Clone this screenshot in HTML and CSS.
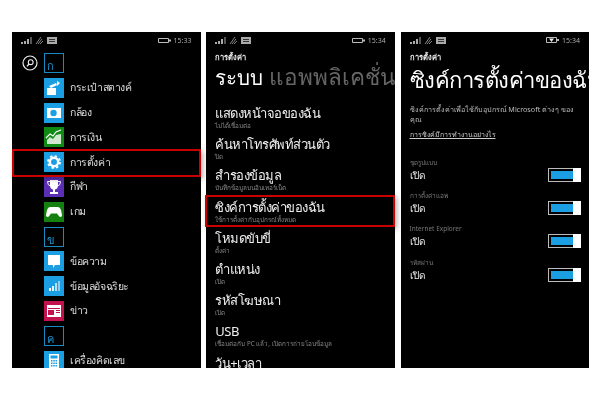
FILE: index.html
```html
<!DOCTYPE html>
<html lang="th">
<head>
    <meta charset="UTF-8">
    <link rel="stylesheet" href="styles.css">
    <title>ซิงค์การตั้งค่า</title>
</head>
<body>
    <div class="shots">

        <!-- app list -->
        <section class="phone">
            <div class="screen">
                <div class="status">
                    <span class="status-left">
                        <svg width="11" height="7" viewBox="0 0 11 7"><path fill="#aaa" d="M0 5h2v2H0zM3 4h2v3H3zM6 2h2v5H6z"/><path fill="#555" d="M9 0h2v7H9z"/></svg>
                        <svg width="9" height="7" viewBox="0 0 9 7"><path fill="none" stroke="#888" d="M1 7L6 0M3 7l4-5M5 7l3-3"/></svg>
                        <svg width="10" height="7" viewBox="0 0 10 7"><path fill="#aaa" d="M0 0h10v7H0z"/><path fill="#333" d="M2 2h6v1H2zM2 4h6v1H2z"/></svg>
                    </span>
                    <span class="status-right">
                        <svg width="13" height="5" viewBox="0 0 13 5"><path fill="none" stroke="#bbb" d="M.5.5h10v4H.5z"/><path fill="#bbb" d="M11 1.500h2v2h-2z"/></svg>
                        15:33
                    </span>
                </div>
                <div class="app-list">
                    <div class="search-col">
                        <svg width="16" height="16" viewBox="0 0 16 16"><circle cx="8" cy="8" r="7" fill="none" stroke="#eee" stroke-width="1.2"/><circle cx="8.700" cy="7.200" r="2.400" fill="none" stroke="#eee" stroke-width="1.100"/><path d="M7 9l-2 2.400" stroke="#eee" stroke-width="1.300"/></svg>
                    </div>
                    <div class="apps">
                        <div class="app"><span class="tile letter">ก</span></div>
                        <div class="app"><span class="tile blue">
                            <svg viewBox="0 0 20 20"><path fill="#fff" d="M3 10h9v7H3zM5 8l7-3 1 2-6 3zM13 3l3 2-3 3z"/></svg>
                        </span>กระเป๋าสตางค์</div>
                        <div class="app"><span class="tile blue">
                            <svg viewBox="0 0 20 20"><rect x="3" y="5" width="14" height="10" fill="#fff"/><circle cx="9.500" cy="10" r="3.200" fill="#1c9fe2"/></svg>
                        </span>กล้อง</div>
                        <div class="app"><span class="tile green">
                            <svg viewBox="0 0 20 20"><path fill="#cfe8cf" d="M3 17v-4l3-3 3 2 3-4 5-1v10z"/><path fill="none" stroke="#fff" stroke-width="1.200" d="M2 11l4-4 3 2 3-4 5-2"/></svg>
                        </span>การเงิน</div>
                        <div class="app"><span class="tile blue">
                            <svg viewBox="0 0 20 20"><circle cx="10" cy="10" r="4.200" fill="none" stroke="#fff" stroke-width="2.400"/><circle cx="10" cy="10" r="6" fill="none" stroke="#fff" stroke-width="1.800" stroke-dasharray="2.400 2.300"/></svg>
                        </span>การตั้งค่า</div>
                        <div class="app"><span class="tile purple">
                            <svg viewBox="0 0 20 20"><path fill="#fff" d="M6 3h8v5q0 4-3 4.600V15h3v2H6v-2h3v-2.400Q6 12 6 8z"/><path fill="none" stroke="#fff" d="M6 4.500H3.500q0 4 3 4.500M14 4.500h2.500q0 4-3 4.500"/></svg>
                        </span>กีฬา</div>
                        <div class="app"><span class="tile dark-green">
                            <svg viewBox="0 0 20 20"><path fill="#fff" d="M6 5h8q2 0 3 3l1 5q0 2-1.500 2-1 0-2-1.500L13 11.500H7L5.500 13.500Q4.500 15 3.500 15 2 15 2 13l1-5q1-3 3-3z"/></svg>
                        </span>เกม</div>
                        <div class="app"><span class="tile letter">ข</span></div>
                        <div class="app"><span class="tile blue">
                            <svg viewBox="0 0 20 20"><path fill="#fff" d="M4 4h12v10h-5l-2 3v-3H4z"/></svg>
                        </span>ข้อความ</div>
                        <div class="app"><span class="tile blue">
                            <svg viewBox="0 0 20 20"><path fill="#fff" d="M5 12h2v3H5z"/><path fill="#e6f4fc" d="M8 10h2v5H8z"/><path fill="#b9e0f6" d="M11 7h2v8h-2z"/><path fill="#8fcdf0" d="M14 5h2v10h-2z"/></svg>
                        </span>ข้อมูลอัจฉริยะ</div>
                        <div class="app"><span class="tile crimson">
                            <svg viewBox="0 0 20 20"><path fill="#fff" d="M3 4h14v12H3z"/><path fill="#c2134e" d="M4 7h12v1H4zM4 9h6v5H4zM12 9h4v1h-4zM12 11h4v1h-4z"/></svg>
                        </span>ข่าว</div>
                        <div class="app"><span class="tile letter">ค</span></div>
                        <div class="app"><span class="tile blue">
                            <svg viewBox="0 0 20 20"><path fill="#fff" d="M5 3h10v14H5z"/><path fill="#1c9fe2" d="M6.500 4.500h7v3h-7zM7 9h1.500v1.500H7zM9.300 9h1.500v1.500H9.300zM11.500 9H13v1.500h-1.500zM7 11.500h1.500V13H7zM9.300 11.500h1.500V13H9.300zM11.500 11.500H13V13h-1.500zM7 14h1.500v1.500H7zM9.300 14h1.500v1.500H9.300zM11.500 14H13v1.500h-1.500z"/></svg>
                        </span>เครื่องคิดเลข</div>
                    </div>
                </div>
            </div>
            <div class="mark mark-app"></div>
        </section>

        <!-- settings list -->
        <section class="phone">
            <div class="screen">
                <div class="status">
                    <span class="status-left">
                        <svg width="11" height="7" viewBox="0 0 11 7"><path fill="#aaa" d="M0 5h2v2H0zM3 4h2v3H3zM6 2h2v5H6z"/><path fill="#555" d="M9 0h2v7H9z"/></svg>
                        <svg width="9" height="7" viewBox="0 0 9 7"><path fill="none" stroke="#888" d="M1 7L6 0M3 7l4-5M5 7l3-3"/></svg>
                        <svg width="10" height="7" viewBox="0 0 10 7"><path fill="#aaa" d="M0 0h10v7H0z"/><path fill="#333" d="M2 2h6v1H2zM2 4h6v1H2z"/></svg>
                    </span>
                    <span class="status-right">
                        <svg width="13" height="5" viewBox="0 0 13 5"><path fill="none" stroke="#bbb" d="M.5.5h10v4H.5z"/><path fill="#bbb" d="M11 1.500h2v2h-2z"/></svg>
                        15:34
                    </span>
                </div>
                <div class="crumb">การตั้งค่า</div>
                <div class="pivot"><span>ระบบ</span> <span class="pivot-off">แอพพลิเคชั่น</span></div>
                <div class="settings">
                    <div class="setting"><h3>แสดงหน้าจอของฉัน</h3><p>ไม่ได้เชื่อมต่อ</p></div>
                    <div class="setting"><h3>ค้นหาโทรศัพท์ส่วนตัว</h3><p>ปิด</p></div>
                    <div class="setting"><h3>สำรองข้อมูล</h3><p>บันทึกข้อมูลบนอินเทอร์เน็ต</p></div>
                    <div class="setting"><h3>ซิงค์การตั้งค่าของฉัน</h3><p>ใช้การตั้งค่ากับอุปกรณ์ทั้งหมด</p></div>
                    <div class="setting"><h3>โหมดขับขี่</h3><p>ตั้งค่า</p></div>
                    <div class="setting"><h3>ตำแหน่ง</h3><p>เปิด</p></div>
                    <div class="setting"><h3>รหัสโฆษณา</h3><p>เปิด</p></div>
                    <div class="setting"><h3>USB</h3><p>เชื่อมต่อกับ PC แล้ว, เปิดการถ่ายโอนข้อมูล</p></div>
                    <div class="setting"><h3>วัน+เวลา</h3></div>
                </div>
            </div>
            <div class="mark mark-setting"></div>
        </section>

        <!-- sync settings -->
        <section class="phone">
            <div class="screen">
                <div class="status">
                    <span class="status-left">
                        <svg width="11" height="7" viewBox="0 0 11 7"><path fill="#aaa" d="M0 5h2v2H0zM3 4h2v3H3zM6 2h2v5H6z"/><path fill="#555" d="M9 0h2v7H9z"/></svg>
                        <svg width="9" height="7" viewBox="0 0 9 7"><path fill="none" stroke="#888" d="M1 7L6 0M3 7l4-5M5 7l3-3"/></svg>
                        <svg width="10" height="7" viewBox="0 0 10 7"><path fill="#aaa" d="M0 0h10v7H0z"/><path fill="#333" d="M2 2h6v1H2zM2 4h6v1H2z"/></svg>
                    </span>
                    <span class="status-right">
                        <svg width="13" height="6" viewBox="0 0 13 6"><path fill="none" stroke="#bbb" d="M.5.5h10v5H.5z"/><path fill="#eee" d="M3 1.500h5L5.500 5z"/><path fill="#bbb" d="M11 2h2v2h-2z"/></svg>
                        15:34
                    </span>
                </div>
                <div class="crumb">การตั้งค่า</div>
                <div class="sync-title">ซิงค์การตั้งค่าของฉัน</div>
                <p class="sync-desc">ซิงค์การตั้งค่าเพื่อใช้กับอุปกรณ์ Microsoft ต่างๆ ของ คุณ</p>
                <a class="sync-link">การซิงค์มีการทำงานอย่างไร</a>
                <div class="toggles">
                    <div class="toggle-row">
                        <div><div class="toggle-label">ชุดรูปแบบ</div><div class="toggle-state">เปิด</div></div>
                        <span class="toggle"><i></i></span>
                    </div>
                    <div class="toggle-row">
                        <div><div class="toggle-label">การตั้งค่าแอพ</div><div class="toggle-state">เปิด</div></div>
                        <span class="toggle"><i></i></span>
                    </div>
                    <div class="toggle-row">
                        <div><div class="toggle-label">Internet Explorer</div><div class="toggle-state">เปิด</div></div>
                        <span class="toggle"><i></i></span>
                    </div>
                    <div class="toggle-row">
                        <div><div class="toggle-label">รหัสผ่าน</div><div class="toggle-state">เปิด</div></div>
                        <span class="toggle"><i></i></span>
                    </div>
                </div>
            </div>
        </section>
    </div>
</body>
</html>
```

FILE: styles.css
```css
*{
    box-sizing: border-box;
    font-family: "Noto Sans", "Open Sans", "DejaVu Sans", sans-serif;
}

:root{
    --accent: #1c9fe2;
    --red: #c80000;
}

body{
    margin: 0;
    background-color: white;
    color: #e8e8e8;
}

.shots{
    display: flex;
    gap: 5.750px;
    padding: 32px 0 0 12px;
}

.phone{
    width: 188.500px;
    height: 336px;
    flex: none;
    position: relative;
}

.screen{
    height: 100%;
    background-color: black;
    overflow: hidden;
    filter: blur(0.35px);
}

.status{
    height: 16px;
    display: flex;
    justify-content: space-between;
    align-items: center;
    padding: 0 9px 0 9px;
    font-size: 7px;
    color: #aaa;
}

.status-left, .status-right{
    display: flex;
    align-items: center;
    gap: 3px;
}

/* red marks drawn over the screenshots */
.mark{
    position: absolute;
    border: 2px solid var(--red);
    box-shadow: 2px 2px 5px rgba(0, 0, 0, 0.3);
}

.mark-app{
    top: 117px;
    left: 0;
    right: 0;
    height: 28px;
}

.mark-setting{
    top: 163px;
    left: -1px;
    right: 0;
    height: 32px;
}

/* app list */
.app-list{
    display: flex;
    padding-top: 5px;
}

.search-col{
    width: 32px;
    padding: 1px 0 0 10px;
}

.apps{
    flex: 1;
}

.app{
    height: 20px;
    margin-bottom: 4.800px;
    display: flex;
    align-items: center;
    gap: 6px;
    font-size: 10.500px;
    letter-spacing: -0.4px;
    color: #ddd;
}

.tile{
    width: 20px;
    height: 20px;
    flex: none;
    display: block;
}

.tile svg{
    display: block;
    width: 20px;
    height: 20px;
}

.blue{ background-color: var(--accent); }
.green{ background-color: #0f8a14; }
.dark-green{ background-color: #14800f; }
.purple{ background-color: #5a2fb5; }
.crimson{ background-color: #c2134e; }

.letter{
    display: flex;
    align-items: flex-end;
    border: 1.500px solid #1b8ac4;
    color: #1f93cf;
    font-size: 11px;
    line-height: 1;
    padding: 0 0 1px 2px;
}

/* settings */
.crumb{
    font-size: 7.500px;
    font-weight: bold;
    padding: 3px 0 0 9px;
    height: 14px;
    color: #eee;
}

.pivot{
    font-size: 20.500px;
    line-height: 30px;
    padding-left: 9px;
    white-space: nowrap;
    color: #fff;
}

.pivot-off{
    font-size: 22.500px;
    color: #666;
}

.settings{
    padding-top: 12px;
}

.setting{
    height: 31.200px;
    padding-left: 9px;
}

.setting h3{
    margin: 0;
    font-size: 13px;
    letter-spacing: -0.5px;
    font-weight: normal;
    line-height: 18px;
    color: #f0f0f0;
    white-space: nowrap;
}

.setting p{
    margin: 0;
    font-size: 6.300px;
    line-height: 8px;
    color: #888;
    white-space: nowrap;
}

/* sync */
.sync-title{
    font-size: 22px;
    font-weight: 300;
    letter-spacing: -0.5px;
    line-height: 34px;
    padding-left: 9px;
    white-space: nowrap;
    color: #fff;
}

.sync-desc{
    margin: 9px 8px 0 9px;
    font-size: 7.200px;
    line-height: 9.500px;
    color: #bbb;
}

.sync-link{
    display: block;
    margin: 6px 0 0 9px;
    font-size: 7px;
    line-height: 10px;
    color: #ccc;
    text-decoration: underline;
}

.toggles{
    padding: 9.500px 8.500px 0 9px;
}

.toggle-row{
    height: 33.300px;
    display: flex;
    justify-content: space-between;
    align-items: flex-end;
    padding-bottom: 1px;
}

.toggle-label{
    font-size: 6.500px;
    line-height: 10px;
    color: #777;
    white-space: nowrap;
}

.toggle-state{
    font-size: 10px;
    line-height: 14px;
    color: #eee;
}

.toggle{
    width: 33px;
    height: 14px;
    display: block;
    position: relative;
    border: 1px solid #bbb;
    padding: 2px;
}

.toggle i{
    display: block;
    width: 22px;
    height: 8px;
    background-color: var(--accent);
}

/* the thumb sits over the track */
.toggle::after{
    content: "";
    position: absolute;
    top: -1px;
    right: -1px;
    width: 8px;
    height: 14px;
    background-color: white;
}
```
